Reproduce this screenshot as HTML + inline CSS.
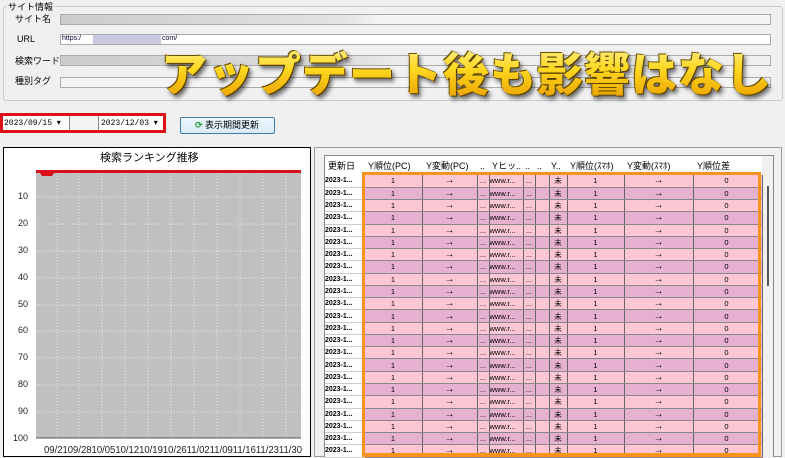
<!DOCTYPE html>
<html><head><meta charset="utf-8"><style>
*{box-sizing:border-box;margin:0;padding:0}
body{width:785px;height:457px;overflow:hidden;background:#f0f0f0;font-family:"Liberation Sans","Noto Sans CJK JP",sans-serif;position:relative;font-size:9px;color:#000}
.a{position:absolute}
.lbl{font-size:9px}
.inp{position:absolute;left:60px;width:711px;height:11px;border:1px solid #aaa;background:#f4f4f4}
.title{position:absolute;left:161px;top:44px;font-family:"Noto Sans CJK JP",sans-serif;font-weight:900;font-size:46px;letter-spacing:1px;line-height:56px;white-space:nowrap;
 background:linear-gradient(#fff090 0%,#ffd820 45%,#e8a000 100%);-webkit-background-clip:text;background-clip:text;color:transparent;
 filter:drop-shadow(1px 1px 0 #5a4000) drop-shadow(-1px -1px 0 #6a5000) drop-shadow(2px 3px 2px rgba(0,0,0,.55))}
table{border-collapse:collapse;table-layout:fixed;font-size:7.5px}
td{height:12.27px;border-right:1px solid #666;border-bottom:1px solid #888;text-align:center;overflow:hidden;white-space:nowrap;padding:0;line-height:11px}
tr:nth-child(odd) td{background:#fcc6d4}
tr:nth-child(even) td{background:#e6b0d0}
td:nth-child(3),td:nth-child(10){font-size:10px;font-weight:bold}
td.d{background:#fff!important;text-align:left;font-size:7px;font-weight:bold;border-right:1px solid #999;border-bottom:1px solid #ccc}
td.l{text-align:left}
</style></head><body>
<div class="a" style="left:3px;top:6px;width:780px;height:95px;border:1px solid #ccc;border-radius:3px"></div>
<div class="a lbl" style="left:7px;top:0;background:#f0f0f0;padding:0 1px">サイト情報</div>
<div class="a lbl" style="left:15px;top:12px">サイト名</div>
<div class="a lbl" style="left:17px;top:34px">URL</div>
<div class="a lbl" style="left:15px;top:54px">検索ワード</div>
<div class="a lbl" style="left:15px;top:74px">種別タグ</div>
<div class="inp" style="top:14px;background:linear-gradient(90deg,#ccc 0,#ddd 30%,#e4e4e4 40%,#f4f4f4 45%)"></div>
<div class="inp" style="top:34px;background:#fff"></div>
<div class="a" style="left:93px;top:35px;width:68px;height:9px;background:#c9c9e0"></div>
<div class="a" style="left:62px;top:35px;font-size:7px;color:#003">https:/</div>
<div class="a" style="left:162px;top:35px;font-size:7px;color:#003">com/</div>
<div class="inp" style="top:55px;background:linear-gradient(90deg,#ccc,#ddd 40%,#f0f0f0 50%)"></div>
<div class="inp" style="top:77px"></div>
<div class="title">アップデート後も影響はなし</div>

<div class="a" style="left:0;top:113px;width:166px;height:20px;border:3px solid #e0101a;background:#fff"></div>
<div class="a" style="left:4px;top:118px;font-size:8px;font-family:'Liberation Mono',monospace">2023/09/15 ▾</div>
<div class="a" style="left:69px;top:116px;width:30px;height:14px;border-left:1px solid #888;border-right:1px solid #888;background:#f4f4f4"></div>
<div class="a" style="left:101px;top:118px;font-size:8px;font-family:'Liberation Mono',monospace">2023/12/03 ▾</div>
<div class="a" style="left:180px;top:117px;width:95px;height:17px;border:1px solid #3c7fb1;border-radius:2px;background:linear-gradient(#eef7fd,#d8ebf8);font-size:9px;line-height:15px;padding-left:14px"><span style="color:#2a9a3a;font-weight:bold">⟳</span> 表示期間更新</div>

<div class="a" style="left:3px;top:147px;width:308px;height:310px;border:1px solid #000;background:#fff"></div>
<div class="a" style="left:100px;top:149px;font-size:11px">検索ランキング推移</div>
<svg class="a" style="left:0;top:160px" width="312" height="297">
<rect x="36" y="10" width="265" height="268" fill="#c0c0c0"/>
<g stroke="#e8e8e8" stroke-dasharray="1,2" stroke-width="1">
<line x1="36" y1="37" x2="301" y2="37"/><line x1="36" y1="64" x2="301" y2="64"/><line x1="36" y1="91" x2="301" y2="91"/><line x1="36" y1="118" x2="301" y2="118"/><line x1="36" y1="145" x2="301" y2="145"/><line x1="36" y1="171" x2="301" y2="171"/><line x1="36" y1="198" x2="301" y2="198"/><line x1="36" y1="225" x2="301" y2="225"/><line x1="36" y1="252" x2="301" y2="252"/>
<line x1="57" y1="10" x2="57" y2="278"/><line x1="79" y1="10" x2="79" y2="278"/><line x1="102" y1="10" x2="102" y2="278"/><line x1="125" y1="10" x2="125" y2="278"/><line x1="148" y1="10" x2="148" y2="278"/><line x1="171" y1="10" x2="171" y2="278"/><line x1="194" y1="10" x2="194" y2="278"/><line x1="217" y1="10" x2="217" y2="278"/><line x1="240" y1="10" x2="240" y2="278"/><line x1="263" y1="10" x2="263" y2="278"/><line x1="286" y1="10" x2="286" y2="278"/>
</g>
<path d="M36 10 H301 V13 H54 L52 16 H42 L40 13 H36Z" fill="#d8101a"/>
<line x1="36" y1="278" x2="301" y2="278" stroke="#555"/>
<g font-size="9" fill="#222" text-anchor="end" font-family="Liberation Sans">
<text x="28" y="39">10</text><text x="28" y="66">20</text><text x="28" y="93">30</text><text x="28" y="120">40</text><text x="28" y="147">50</text><text x="28" y="173">60</text><text x="28" y="200">70</text><text x="28" y="227">80</text><text x="28" y="254">90</text><text x="28" y="281">100</text>
</g>
<text x="44" y="293" font-size="10" fill="#222" font-family="Liberation Sans" textLength="258" lengthAdjust="spacingAndGlyphs">09/2109/2810/0510/1210/1910/2611/0211/0911/1611/2311/30</text>
</svg>

<div class="a" style="left:314px;top:147px;width:468px;height:310px;border:1px solid #999;background:#f0f0f0"></div>
<div class="a" style="left:324px;top:155px;width:450px;height:302px;border:1px solid #888;background:#fff"></div>
<div class="a" style="left:762px;top:156px;width:11px;height:301px;background:#f0f0f0"></div>
<div class="a" style="left:767px;top:186px;width:2px;height:100px;background:#555"></div>
<div class="a" style="left:325px;top:157px;height:18px;font-size:9px;white-space:nowrap;line-height:18px">
<span class="a" style="left:3px">更新日</span><span class="a" style="left:43px">Y順位(PC)</span><span class="a" style="left:101px">Y変動(PC)</span><span class="a" style="left:155px">..</span><span class="a" style="left:167px">Yヒッ..</span><span class="a" style="left:200px">..</span><span class="a" style="left:212px">..</span><span class="a" style="left:226px">Y..</span><span class="a" style="left:245px">Y順位(ｽﾏﾎ)</span><span class="a" style="left:302px">Y変動(ｽﾏﾎ)</span><span class="a" style="left:372px">Y順位差</span>
</div>
<table class="a" style="left:325px;top:175px;width:437px">
<colgroup><col style="width:39px"><col style="width:58px"><col style="width:55px"><col style="width:12px"><col style="width:34px"><col style="width:12px"><col style="width:14px"><col style="width:18px"><col style="width:57px"><col style="width:69px"><col style="width:67px"><col style="width:2px"></colgroup>
<tbody>
<tr><td class="d">2023-1...</td><td>1</td><td>→</td><td>...</td><td class="l">www.r...</td><td>...</td><td></td><td>未</td><td>1</td><td>→</td><td>0</td><td></td></tr>
<tr><td class="d">2023-1...</td><td>1</td><td>→</td><td>...</td><td class="l">www.r...</td><td>...</td><td></td><td>未</td><td>1</td><td>→</td><td>0</td><td></td></tr>
<tr><td class="d">2023-1...</td><td>1</td><td>→</td><td>...</td><td class="l">www.r...</td><td>...</td><td></td><td>未</td><td>1</td><td>→</td><td>0</td><td></td></tr>
<tr><td class="d">2023-1...</td><td>1</td><td>→</td><td>...</td><td class="l">www.r...</td><td>...</td><td></td><td>未</td><td>1</td><td>→</td><td>0</td><td></td></tr>
<tr><td class="d">2023-1...</td><td>1</td><td>→</td><td>...</td><td class="l">www.r...</td><td>...</td><td></td><td>未</td><td>1</td><td>→</td><td>0</td><td></td></tr>
<tr><td class="d">2023-1...</td><td>1</td><td>→</td><td>...</td><td class="l">www.r...</td><td>...</td><td></td><td>未</td><td>1</td><td>→</td><td>0</td><td></td></tr>
<tr><td class="d">2023-1...</td><td>1</td><td>→</td><td>...</td><td class="l">www.r...</td><td>...</td><td></td><td>未</td><td>1</td><td>→</td><td>0</td><td></td></tr>
<tr><td class="d">2023-1...</td><td>1</td><td>→</td><td>...</td><td class="l">www.r...</td><td>...</td><td></td><td>未</td><td>1</td><td>→</td><td>0</td><td></td></tr>
<tr><td class="d">2023-1...</td><td>1</td><td>→</td><td>...</td><td class="l">www.r...</td><td>...</td><td></td><td>未</td><td>1</td><td>→</td><td>0</td><td></td></tr>
<tr><td class="d">2023-1...</td><td>1</td><td>→</td><td>...</td><td class="l">www.r...</td><td>...</td><td></td><td>未</td><td>1</td><td>→</td><td>0</td><td></td></tr>
<tr><td class="d">2023-1...</td><td>1</td><td>→</td><td>...</td><td class="l">www.r...</td><td>...</td><td></td><td>未</td><td>1</td><td>→</td><td>0</td><td></td></tr>
<tr><td class="d">2023-1...</td><td>1</td><td>→</td><td>...</td><td class="l">www.r...</td><td>...</td><td></td><td>未</td><td>1</td><td>→</td><td>0</td><td></td></tr>
<tr><td class="d">2023-1...</td><td>1</td><td>→</td><td>...</td><td class="l">www.r...</td><td>...</td><td></td><td>未</td><td>1</td><td>→</td><td>0</td><td></td></tr>
<tr><td class="d">2023-1...</td><td>1</td><td>→</td><td>...</td><td class="l">www.r...</td><td>...</td><td></td><td>未</td><td>1</td><td>→</td><td>0</td><td></td></tr>
<tr><td class="d">2023-1...</td><td>1</td><td>→</td><td>...</td><td class="l">www.r...</td><td>...</td><td></td><td>未</td><td>1</td><td>→</td><td>0</td><td></td></tr>
<tr><td class="d">2023-1...</td><td>1</td><td>→</td><td>...</td><td class="l">www.r...</td><td>...</td><td></td><td>未</td><td>1</td><td>→</td><td>0</td><td></td></tr>
<tr><td class="d">2023-1...</td><td>1</td><td>→</td><td>...</td><td class="l">www.r...</td><td>...</td><td></td><td>未</td><td>1</td><td>→</td><td>0</td><td></td></tr>
<tr><td class="d">2023-1...</td><td>1</td><td>→</td><td>...</td><td class="l">www.r...</td><td>...</td><td></td><td>未</td><td>1</td><td>→</td><td>0</td><td></td></tr>
<tr><td class="d">2023-1...</td><td>1</td><td>→</td><td>...</td><td class="l">www.r...</td><td>...</td><td></td><td>未</td><td>1</td><td>→</td><td>0</td><td></td></tr>
<tr><td class="d">2023-1...</td><td>1</td><td>→</td><td>...</td><td class="l">www.r...</td><td>...</td><td></td><td>未</td><td>1</td><td>→</td><td>0</td><td></td></tr>
<tr><td class="d">2023-1...</td><td>1</td><td>→</td><td>...</td><td class="l">www.r...</td><td>...</td><td></td><td>未</td><td>1</td><td>→</td><td>0</td><td></td></tr>
<tr><td class="d">2023-1...</td><td>1</td><td>→</td><td>...</td><td class="l">www.r...</td><td>...</td><td></td><td>未</td><td>1</td><td>→</td><td>0</td><td></td></tr>
<tr><td class="d">2023-1...</td><td>1</td><td>→</td><td>...</td><td class="l">www.r...</td><td>...</td><td></td><td>未</td><td>1</td><td>→</td><td>0</td><td></td></tr>
</tbody></table>
<div class="a" style="left:362px;top:172px;width:399px;height:285px;border:3px solid #f7931e;border-bottom-width:4px"></div>
</body></html>
